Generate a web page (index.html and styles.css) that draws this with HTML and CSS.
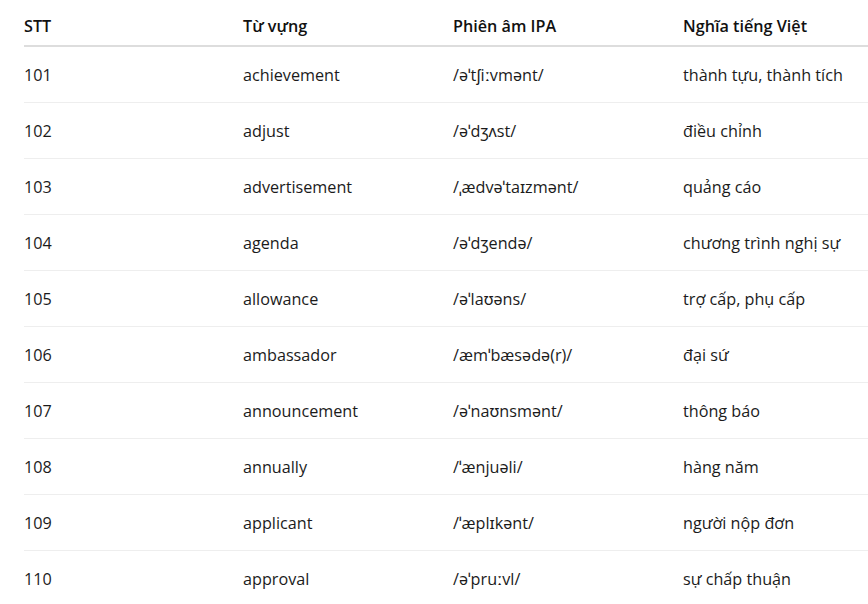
FILE: index.html
```html
<!DOCTYPE html>
<html lang="vi">
<head>
<meta charset="utf-8">
<title>Từ vựng</title>
<link rel="stylesheet" href="styles.css">
</head>
<body>
<div class="wrap">
  <div class="table">
    <div class="row head"><div>STT</div><div>Từ vựng</div><div>Phiên âm IPA</div><div>Nghĩa tiếng Việt</div></div>
    <div class="row"><div>101</div><div>achievement</div><div>/əˈtʃiːvmənt/</div><div>thành tựu, thành tích</div></div>
    <div class="row"><div>102</div><div>adjust</div><div>/əˈdʒʌst/</div><div>điều chỉnh</div></div>
    <div class="row"><div>103</div><div>advertisement</div><div>/ˌædvəˈtaɪzmənt/</div><div>quảng cáo</div></div>
    <div class="row"><div>104</div><div>agenda</div><div>/əˈdʒendə/</div><div>chương trình nghị sự</div></div>
    <div class="row"><div>105</div><div>allowance</div><div>/əˈlaʊəns/</div><div>trợ cấp, phụ cấp</div></div>
    <div class="row"><div>106</div><div>ambassador</div><div>/æmˈbæsədə(r)/</div><div>đại sứ</div></div>
    <div class="row"><div>107</div><div>announcement</div><div>/əˈnaʊnsmənt/</div><div>thông báo</div></div>
    <div class="row"><div>108</div><div>annually</div><div>/ˈænjuəli/</div><div>hàng năm</div></div>
    <div class="row"><div>109</div><div>applicant</div><div>/ˈæplɪkənt/</div><div>người nộp đơn</div></div>
    <div class="row last"><div>110</div><div>approval</div><div>/əˈpruːvl/</div><div>sự chấp thuận</div></div>
  </div>
</div>
</body>
</html>
```
FILE: styles.css
```css
html, body {
  margin: 0;
  padding: 0;
  background: #ffffff;
}
body {
  font-family: "Open Sans", "Noto Sans", sans-serif;
  font-size: 16.2px;
  color: #1b1b1b;
  overflow: hidden;
}
.wrap {
  padding: 7px 0 0 24px;
}
.table {
  width: 100%;
}
.row {
  display: grid;
  grid-template-columns: 219px 210px 230px 1fr;
  height: 56px;
  align-items: center;
  border-bottom: 1px solid #eeeeee;
  box-sizing: border-box;
}
.row.head {
  height: 40px;
  font-weight: 600;
  color: #111111;
  border-bottom: 2px solid #dddddd;
}
.row.last {
  border-bottom: none;
}
```
